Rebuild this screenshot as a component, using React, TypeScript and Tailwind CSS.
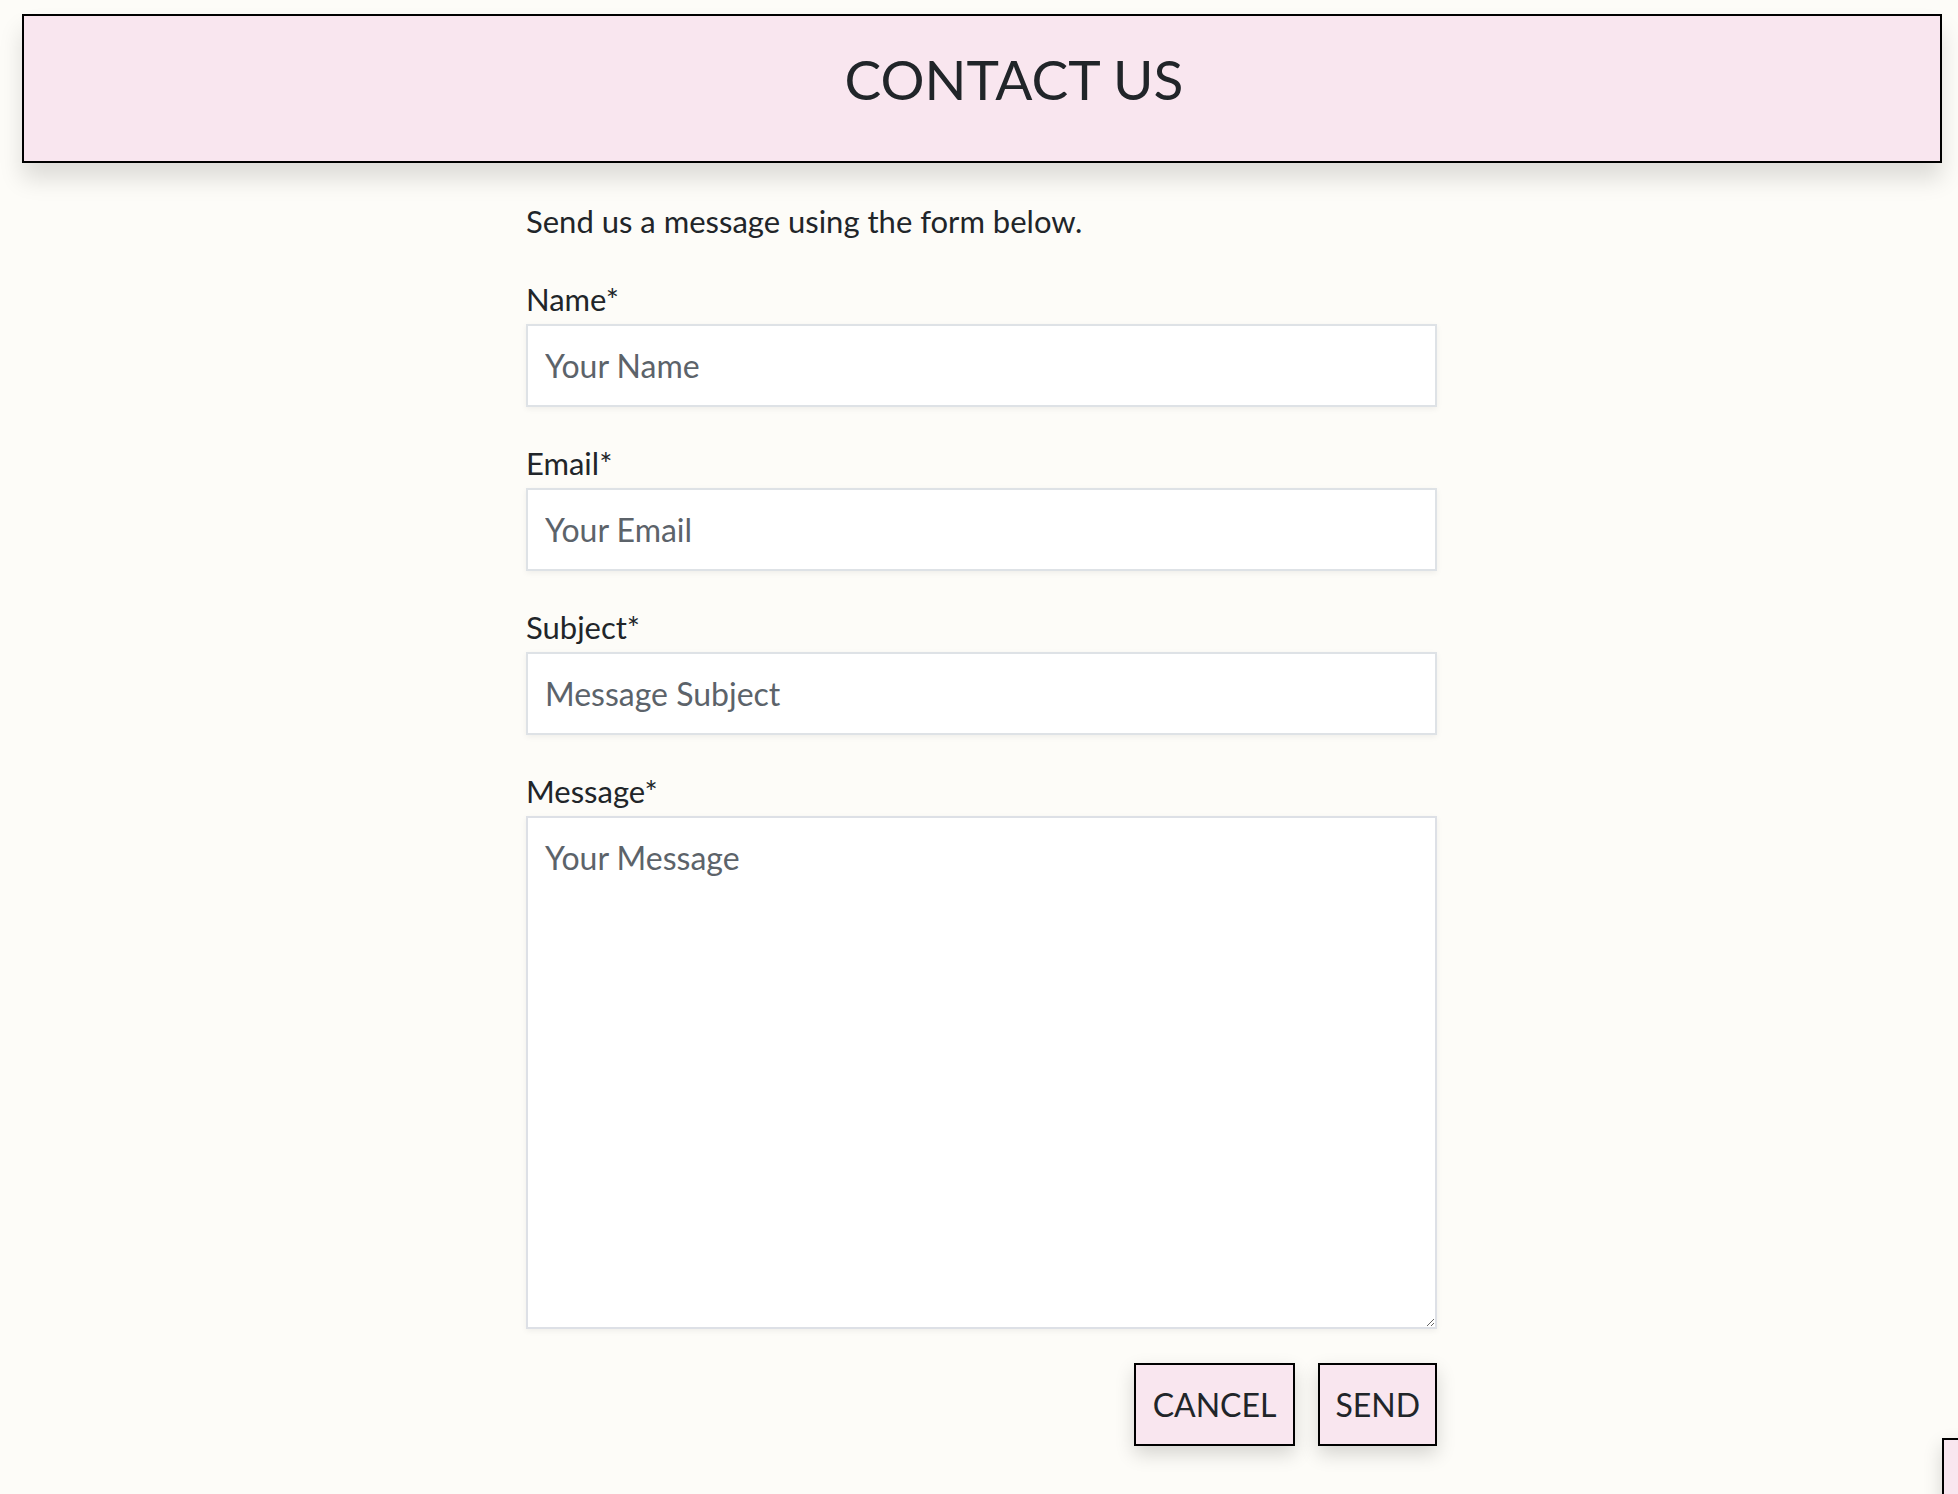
import React from "react";

const font = { fontFamily: "Lato, 'Open Sans', Arial, sans-serif" };

function Field({ label, placeholder }: { label: string; placeholder: string }) {
  return (
    <div className="mb-[34px]">
      <label className="block text-[31px] leading-[45px] text-[#212529] mb-[2px]">{label}</label>
      <input
        type="text"
        placeholder={placeholder}
        className="block w-full h-[83px] box-border border-2 border-[#dee2e6] bg-white px-[17px] text-[32px] leading-[45px] text-[#212529] placeholder:text-[#5c636a] shadow-[0_2px_6px_rgba(0,0,0,0.06)] outline-none"
        style={font}
      />
    </div>
  );
}

export default function App() {
  return (
    <div className="min-h-[1494px] bg-[#fdfcf8] overflow-hidden" style={font}>
      <header className="ml-[22px] mr-[16px] mt-[14px] h-[149px] box-border border-2 border-black bg-[#f9e6ef] shadow-[0_16px_22px_rgba(0,0,0,0.13)] pt-[30px] pl-[64px] text-center">
        <h1 className="text-[55px] leading-[67px] font-normal text-[#212529]">CONTACT US</h1>
      </header>
      <main className="w-[911px] ml-[526px] pt-[36px]">
        <p className="text-[31px] leading-[45px] text-[#212529] mb-[33px]">Send us a message using the form below.</p>
        <Field label="Name*" placeholder="Your Name" />
        <Field label="Email*" placeholder="Your Email" />
        <Field label="Subject*" placeholder="Message Subject" />
        <div className="mb-[34px]">
          <label className="block text-[31px] leading-[45px] text-[#212529] mb-[2px]">Message*</label>
          <textarea
            placeholder="Your Message"
            className="block w-full h-[513px] box-border border-2 border-[#dde0e6] bg-white px-[17px] py-[17px] text-[32px] leading-[45px] text-[#212529] placeholder:text-[#5c636a] shadow-[0_2px_6px_rgba(0,0,0,0.06)] outline-none resize-y"
            style={font}
          />
        </div>
        <div className="flex justify-end gap-[23px]">
          <button className="h-[83px] box-border border-2 border-black bg-[#f9e6ef] px-[17px] text-[32px] leading-[45px] text-[#212529] shadow-[0_8px_18px_rgba(0,0,0,0.16)]" style={font}>CANCEL</button>
          <button className="h-[83px] box-border border-2 border-black bg-[#f9e6ef] px-[15px] text-[32px] leading-[45px] text-[#212529] shadow-[0_8px_18px_rgba(0,0,0,0.16)]" style={font}>SEND</button>
        </div>
      </main>
      <div className="fixed left-[1942px] top-[1438px] w-[80px] h-[80px] box-border border-2 border-black bg-[#f9e6ef] shadow-[0_8px_18px_rgba(0,0,0,0.16)]" />
    </div>
  );
}
